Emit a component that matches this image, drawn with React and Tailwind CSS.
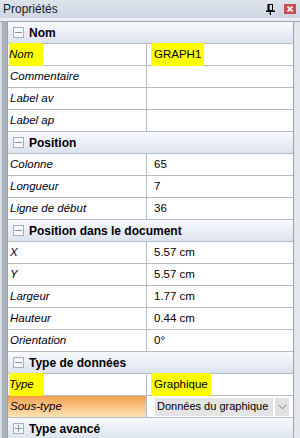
import React from "react";

const font = { fontFamily: '"Liberation Sans", Arial, sans-serif' };

function Box({ plus }) {
  return (
    <div className="relative w-[11px] h-[11px] border border-[#a7afba] bg-[#f6f8fb] flex items-center justify-center">
      <div className="w-[7px] h-px bg-[#8b939e]" />
      {plus && <div className="absolute w-px h-[7px] bg-[#8b939e]" />}
    </div>
  );
}

function Header({ title, plus }) {
  return (
    <div className="h-[22px] flex items-center border-b border-[#b4bcc7] bg-gradient-to-b from-[#f9fafc] to-[#dce4ef] pl-[5px] gap-[5px] shrink-0">
      <Box plus={plus} />
      <span className="text-[12px] font-bold text-black leading-none">{title}</span>
    </div>
  );
}

function Hl({ children, cls }) {
  return <span className={"bg-[#ffff00] rounded-[2px] " + cls}>{children}</span>;
}

function Row({ label, value, labelHl, valueHl }) {
  return (
    <div className="h-[22px] flex border-b border-[#b4bcc7] bg-white shrink-0">
      <div className="w-[139px] border-r border-[#b4bcc7] flex items-center pl-[2px] text-[11.5px] italic text-[#000010] whitespace-nowrap">
        {labelHl ? <Hl cls="pr-[10px] py-[3px] -ml-[1px]">{label}</Hl> : label}
      </div>
      <div className="flex-1 flex items-center pl-[7px] text-[11.5px] text-black whitespace-nowrap">
        {valueHl ? <Hl cls="px-[3px] py-[3px] -ml-[3px]">{value}</Hl> : value}
      </div>
    </div>
  );
}

function Pin() {
  return (
    <svg width="9" height="11" viewBox="0 0 9 11" className="block">
      <rect x="2" y="0.5" width="4.5" height="6" fill="none" stroke="#000" strokeWidth="1" />
      <rect x="2" y="0" width="1.6" height="7" fill="#000" />
      <rect x="0" y="6.5" width="9" height="1.5" fill="#000" />
      <rect x="3.7" y="8" width="1.3" height="3" fill="#000" />
    </svg>
  );
}

export default function App() {
  return (
    <div className="w-[300px] h-[438px] overflow-hidden bg-[#e6eaef] flex flex-col" style={font}>
      <div className="h-[18px] shrink-0 flex items-center justify-between bg-gradient-to-b from-[#dde4ed] to-[#ccd5e1] pl-[3px] pr-[4px]">
        <span className="text-[12px] text-[#1b1b1b] leading-none">Propriétés</span>
        <div className="flex items-center gap-[9px]">
          <Pin />
          <div className="w-[12px] h-[10px] bg-[#c75050] flex items-center justify-center">
            <svg width="6" height="6" viewBox="0 0 6 6">
              <path d="M0.5 0.5 L5.5 5.5 M5.5 0.5 L0.5 5.5" stroke="#fff" strokeWidth="1.6" />
            </svg>
          </div>
        </div>
      </div>
      <div className="h-[3px] shrink-0 bg-[#e9edf2]" />
      <div className="flex-1 flex border-t border-[#9ea6b1] bg-[#c8cfd8]">
        <div className="w-[2px] bg-[#d3d9e1]" />
        <div className="w-[6px] bg-[#a9b1bc] border-r border-[#9aa2ad]" />
        <div className="w-[286px] flex flex-col border-r border-[#9aa2ad]">
          <Header title="Nom" />
          <Row label="Nom" value="GRAPH1" labelHl valueHl />
          <Row label="Commentaire" value="" />
          <Row label="Label av" value="" />
          <Row label="Label ap" value="" />
          <Header title="Position" />
          <Row label="Colonne" value="65" />
          <Row label="Longueur" value="7" />
          <Row label="Ligne de début" value="36" />
          <Header title="Position dans le document" />
          <Row label="X" value="5.57 cm" />
          <Row label="Y" value="5.57 cm" />
          <Row label="Largeur" value="1.77 cm" />
          <Row label="Hauteur" value="0.44 cm" />
          <Row label="Orientation" value="0°" />
          <Header title="Type de données" />
          <Row label="Type" value="Graphique" labelHl valueHl />
          <div className="h-[22px] flex border-b border-[#b4bcc7] bg-white shrink-0">
            <div className="w-[139px] border-r border-[#b4bcc7] flex items-center pl-[2px] text-[11.5px] italic text-[#000010] bg-gradient-to-b from-[#f3a04a] to-[#fde4b6]">
              Sous-type
            </div>
            <div className="flex-1 flex items-center pl-[8px] pr-[4px] gap-[2px]">
              <div className="w-[118px] h-[18px] bg-[#e4e4e4] flex items-center pl-[2px] text-[11px] text-black whitespace-nowrap overflow-hidden">
                Données du graphique
              </div>
              <div className="w-[14px] h-[18px] bg-[#e1e1e1] flex items-center justify-center">
                <svg width="9" height="6" viewBox="0 0 9 6">
                  <path d="M0.5 0.8 L4.5 4.8 L8.5 0.8" fill="none" stroke="#7a7a7a" strokeWidth="1" />
                </svg>
              </div>
            </div>
          </div>
          <Header title="Type avancé" plus />
        </div>
        <div className="flex-1 bg-[#e3e7ec]" />
      </div>
    </div>
  );
}
